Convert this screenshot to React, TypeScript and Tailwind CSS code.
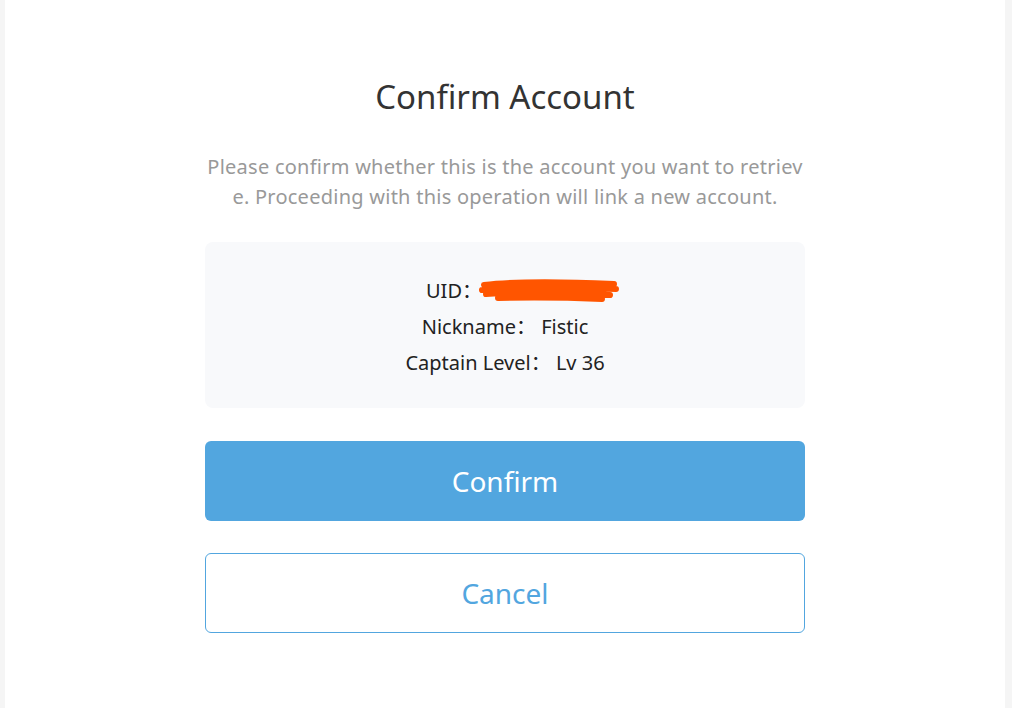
export default function App() {
  const rows = [
    { label: 'Nickname', value: 'Fistic' },
    { label: 'Captain Level', value: 'Lv 36' },
  ]

  return (
    <div
      className="flex h-[708px] w-full bg-[#f5f5f5] pl-[5px]"
      style={{ fontFamily: '"Noto Sans", "Open Sans", "Noto Sans CJK SC", sans-serif' }}
    >
      <div className="flex h-full w-[1000px] flex-col items-center bg-white pt-[74px]">
        <h1 className="text-[33px] leading-[46px] text-[#333]">Confirm Account</h1>

        <p className="mt-[32px] w-[600px] break-all text-center text-[20px] leading-[30px] tracking-[0.25px] text-[#999]">
          Please confirm whether this is the account you want to retrieve. Proceeding with this operation will link a new account.
        </p>

        <div className="mt-[30px] flex w-[600px] flex-col items-center rounded-lg bg-[#f8f9fb] pt-[31px] pb-[27px] text-[20px] leading-[36px] text-[#222]">
          <div className="flex items-center pl-[36px]">
            <span>UID：</span>
            <svg width="142" height="24" viewBox="0 0 142 24" className="-ml-1">
              <path
                d="M6 6 C40 2 90 3 136 5 M4 11 C50 8 100 9 138 10 M8 15 C50 13 100 14 132 16 M20 19 C60 18 100 19 124 20"
                fill="none"
                stroke="#ff5500"
                strokeWidth="6"
                strokeLinecap="round"
              />
            </svg>
          </div>
          {rows.map(({ label, value }) => (
            <div key={label}>
              {label}：&nbsp;{value}
            </div>
          ))}
        </div>

        <button
          type="button"
          className="mt-[33px] h-[80px] w-[600px] rounded-md bg-[#52a6df] text-[28px] text-white"
        >
          Confirm
        </button>
        <button
          type="button"
          className="mt-[32px] h-[80px] w-[600px] rounded-md border border-[#52a6df] bg-white text-[28px] text-[#52a6df]"
        >
          Cancel
        </button>
      </div>
    </div>
  )
}
